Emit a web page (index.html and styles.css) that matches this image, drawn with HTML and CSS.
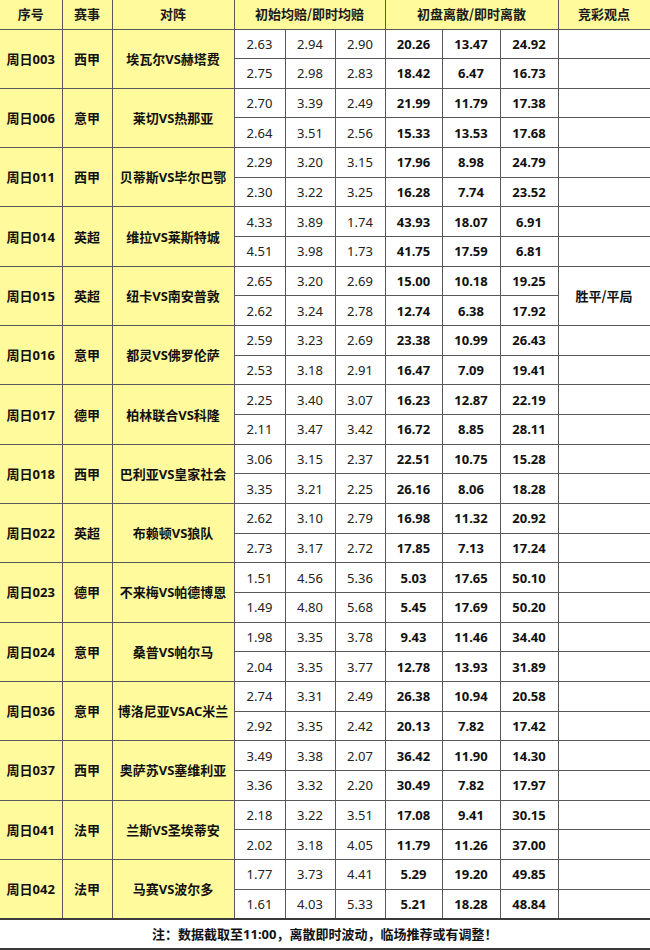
FILE: index.html
```html
<!DOCTYPE html>
<html lang="zh-CN">
<head>
<meta charset="utf-8">
<title>竞彩观点</title>
<link rel="stylesheet" href="styles.css">
</head>
<body>
<table class="odds">
  <colgroup>
    <col class="c-no"><col class="c-lg"><col class="c-match">
    <col class="c-o1"><col class="c-o2"><col class="c-o3">
    <col class="c-d1"><col class="c-d2"><col class="c-d3">
    <col class="c-view">
  </colgroup>
  <thead>
    <tr class="head">
      <th>序号</th><th>赛事</th><th>对阵</th>
      <th colspan="3">初始均赔/即时均赔</th>
      <th colspan="3">初盘离散/即时离散</th>
      <th>竞彩观点</th>
    </tr>
  </thead>
  <tbody>
    <tr><td class="y" rowspan="2">周日003</td><td class="y" rowspan="2">西甲</td><td class="y" rowspan="2">埃瓦尔VS赫塔费</td><td>2.63</td><td>2.94</td><td>2.90</td><td class="b">20.26</td><td class="b">13.47</td><td class="b">24.92</td><td></td></tr>
    <tr><td>2.75</td><td>2.98</td><td>2.83</td><td class="b">18.42</td><td class="b">6.47</td><td class="b">16.73</td><td></td></tr>

    <tr><td class="y" rowspan="2">周日006</td><td class="y" rowspan="2">意甲</td><td class="y" rowspan="2">莱切VS热那亚</td><td>2.70</td><td>3.39</td><td>2.49</td><td class="b">21.99</td><td class="b">11.79</td><td class="b">17.38</td><td></td></tr>
    <tr><td>2.64</td><td>3.51</td><td>2.56</td><td class="b">15.33</td><td class="b">13.53</td><td class="b">17.68</td><td></td></tr>

    <tr><td class="y" rowspan="2">周日011</td><td class="y" rowspan="2">西甲</td><td class="y" rowspan="2">贝蒂斯VS毕尔巴鄂</td><td>2.29</td><td>3.20</td><td>3.15</td><td class="b">17.96</td><td class="b">8.98</td><td class="b">24.79</td><td></td></tr>
    <tr><td>2.30</td><td>3.22</td><td>3.25</td><td class="b">16.28</td><td class="b">7.74</td><td class="b">23.52</td><td></td></tr>

    <tr><td class="y" rowspan="2">周日014</td><td class="y" rowspan="2">英超</td><td class="y" rowspan="2">维拉VS莱斯特城</td><td>4.33</td><td>3.89</td><td>1.74</td><td class="b">43.93</td><td class="b">18.07</td><td class="b">6.91</td><td></td></tr>
    <tr><td>4.51</td><td>3.98</td><td>1.73</td><td class="b">41.75</td><td class="b">17.59</td><td class="b">6.81</td><td></td></tr>

    <tr><td class="y" rowspan="2">周日015</td><td class="y" rowspan="2">英超</td><td class="y" rowspan="2">纽卡VS南安普敦</td><td>2.65</td><td>3.20</td><td>2.69</td><td class="b">15.00</td><td class="b">10.18</td><td class="b">19.25</td><td class="view" rowspan="2">胜平/平局</td></tr>
    <tr><td>2.62</td><td>3.24</td><td>2.78</td><td class="b">12.74</td><td class="b">6.38</td><td class="b">17.92</td></tr>

    <tr><td class="y" rowspan="2">周日016</td><td class="y" rowspan="2">意甲</td><td class="y" rowspan="2">都灵VS佛罗伦萨</td><td>2.59</td><td>3.23</td><td>2.69</td><td class="b">23.38</td><td class="b">10.99</td><td class="b">26.43</td><td></td></tr>
    <tr><td>2.53</td><td>3.18</td><td>2.91</td><td class="b">16.47</td><td class="b">7.09</td><td class="b">19.41</td><td></td></tr>

    <tr><td class="y" rowspan="2">周日017</td><td class="y" rowspan="2">德甲</td><td class="y" rowspan="2">柏林联合VS科隆</td><td>2.25</td><td>3.40</td><td>3.07</td><td class="b">16.23</td><td class="b">12.87</td><td class="b">22.19</td><td></td></tr>
    <tr><td>2.11</td><td>3.47</td><td>3.42</td><td class="b">16.72</td><td class="b">8.85</td><td class="b">28.11</td><td></td></tr>

    <tr><td class="y" rowspan="2">周日018</td><td class="y" rowspan="2">西甲</td><td class="y" rowspan="2">巴利亚VS皇家社会</td><td>3.06</td><td>3.15</td><td>2.37</td><td class="b">22.51</td><td class="b">10.75</td><td class="b">15.28</td><td></td></tr>
    <tr><td>3.35</td><td>3.21</td><td>2.25</td><td class="b">26.16</td><td class="b">8.06</td><td class="b">18.28</td><td></td></tr>

    <tr><td class="y" rowspan="2">周日022</td><td class="y" rowspan="2">英超</td><td class="y" rowspan="2">布赖顿VS狼队</td><td>2.62</td><td>3.10</td><td>2.79</td><td class="b">16.98</td><td class="b">11.32</td><td class="b">20.92</td><td></td></tr>
    <tr><td>2.73</td><td>3.17</td><td>2.72</td><td class="b">17.85</td><td class="b">7.13</td><td class="b">17.24</td><td></td></tr>

    <tr><td class="y" rowspan="2">周日023</td><td class="y" rowspan="2">德甲</td><td class="y" rowspan="2">不来梅VS帕德博恩</td><td>1.51</td><td>4.56</td><td>5.36</td><td class="b">5.03</td><td class="b">17.65</td><td class="b">50.10</td><td></td></tr>
    <tr><td>1.49</td><td>4.80</td><td>5.68</td><td class="b">5.45</td><td class="b">17.69</td><td class="b">50.20</td><td></td></tr>

    <tr><td class="y" rowspan="2">周日024</td><td class="y" rowspan="2">意甲</td><td class="y" rowspan="2">桑普VS帕尔马</td><td>1.98</td><td>3.35</td><td>3.78</td><td class="b">9.43</td><td class="b">11.46</td><td class="b">34.40</td><td></td></tr>
    <tr><td>2.04</td><td>3.35</td><td>3.77</td><td class="b">12.78</td><td class="b">13.93</td><td class="b">31.89</td><td></td></tr>

    <tr><td class="y" rowspan="2">周日036</td><td class="y" rowspan="2">意甲</td><td class="y" rowspan="2">博洛尼亚VSAC米兰</td><td>2.74</td><td>3.31</td><td>2.49</td><td class="b">26.38</td><td class="b">10.94</td><td class="b">20.58</td><td></td></tr>
    <tr><td>2.92</td><td>3.35</td><td>2.42</td><td class="b">20.13</td><td class="b">7.82</td><td class="b">17.42</td><td></td></tr>

    <tr><td class="y" rowspan="2">周日037</td><td class="y" rowspan="2">西甲</td><td class="y" rowspan="2">奥萨苏VS塞维利亚</td><td>3.49</td><td>3.38</td><td>2.07</td><td class="b">36.42</td><td class="b">11.90</td><td class="b">14.30</td><td></td></tr>
    <tr><td>3.36</td><td>3.32</td><td>2.20</td><td class="b">30.49</td><td class="b">7.82</td><td class="b">17.97</td><td></td></tr>

    <tr><td class="y" rowspan="2">周日041</td><td class="y" rowspan="2">法甲</td><td class="y" rowspan="2">兰斯VS圣埃蒂安</td><td>2.18</td><td>3.22</td><td>3.51</td><td class="b">17.08</td><td class="b">9.41</td><td class="b">30.15</td><td></td></tr>
    <tr><td>2.02</td><td>3.18</td><td>4.05</td><td class="b">11.79</td><td class="b">11.26</td><td class="b">37.00</td><td></td></tr>

    <tr><td class="y" rowspan="2">周日042</td><td class="y" rowspan="2">法甲</td><td class="y" rowspan="2">马赛VS波尔多</td><td>1.77</td><td>3.73</td><td>4.41</td><td class="b">5.29</td><td class="b">19.20</td><td class="b">49.85</td><td></td></tr>
    <tr><td>1.61</td><td>4.03</td><td>5.33</td><td class="b">5.21</td><td class="b">18.28</td><td class="b">48.84</td><td></td></tr>
  </tbody>
  <tfoot>
    <tr class="foot"><td colspan="10">注：数据截取至11:00，离散即时波动，临场推荐或有调整！</td></tr>
  </tfoot>
</table>
</body>
</html>
```

FILE: styles.css
```css
html, body {
  margin: 0;
  padding: 0;
  background: #ffffff;
}

.odds {
  width: 650px;
  table-layout: fixed;
  border-collapse: collapse;
  font-family: "Noto Sans", "Noto Sans CJK SC", sans-serif;
  font-size: 13px;
  color: #111111;
}

.c-no { width: 62px; }
.c-lg { width: 50px; }
.c-match { width: 122px; }
.c-o1 { width: 51px; }
.c-o2 { width: 50px; }
.c-o3 { width: 50px; }
.c-d1 { width: 57px; }
.c-d2 { width: 58px; }
.c-d3 { width: 58px; }
.c-view { width: 92px; }

.odds th,
.odds td {
  border: 1px solid #595959;
  padding: 0;
  text-align: center;
  vertical-align: middle;
  white-space: nowrap;
  overflow: hidden;
  line-height: 16px;
}

.odds tr > :first-child { border-left: none; }
.head th { border-top: none; }

.head {
  height: 29px;
  background: #fffb9c;
}

.head th {
  font-family: "Noto Sans CJK SC", sans-serif;
  font-weight: 700;
  color: #1a1a1a;
}

.odds tbody tr {
  height: 29.67px;
}

.odds td {
  color: #222222;
}

.odds td.y {
  background: #fffb9c;
  font-weight: 700;
  color: #111111;
  font-family: "Noto Sans", "Noto Sans CJK SC", sans-serif;
}

.odds td.b {
  font-weight: 700;
  color: #111111;
}

.odds td.view {
  font-family: "Noto Sans CJK SC", sans-serif;
  font-weight: 700;
  color: #111111;
}

.foot {
  height: 30px;
}

.foot td {
  font-weight: 700;
  color: #111111;
  font-family: "Noto Sans", "Noto Sans CJK SC", sans-serif;
  border-bottom: 2px solid #3a3a3a;
  border-top: 2px solid #3a3a3a;
}
```
